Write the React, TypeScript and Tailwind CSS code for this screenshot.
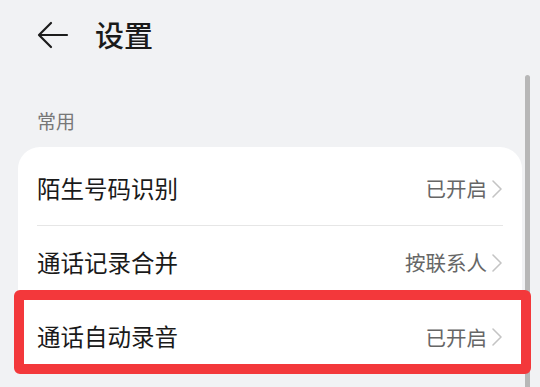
type Row = {
  label: string;
  value: string;
};

const rows: Row[] = [
  { label: "陌生号码识别", value: "已开启" },
  { label: "通话记录合并", value: "按联系人" },
  { label: "通话自动录音", value: "已开启" },
];

function Chevron() {
  return (
    <svg width="12" height="20" viewBox="0 0 12 20" fill="none" className="ml-[4px]">
      <path d="M2 2 L10 10 L2 18" stroke="#c4c4c4" strokeWidth="1.6" strokeLinecap="round" strokeLinejoin="round" />
    </svg>
  );
}

export default function App() {
  return (
    <div
      className="relative h-[387px] w-[540px] overflow-hidden bg-[#f1f2f4]"
      style={{ fontFamily: '"Noto Sans CJK SC", "Noto Sans", sans-serif' }}
    >
      <header className="flex h-[70px] items-center pl-[36px]">
        <svg width="34" height="30" viewBox="0 0 34 30" fill="none">
          <path d="M31 15 H4 M15 3 L3 15 L15 27" stroke="#1c1c1c" strokeWidth="2.2" strokeLinecap="round" strokeLinejoin="round" />
        </svg>
        <h1 className="ml-[25px] text-[29px] font-medium text-[#1a1a1a]">设置</h1>
      </header>

      <p className="mt-[35px] pl-[37px] text-[19px] leading-[32px] text-[#777777]">常用</p>

      <section className="mx-[18px] mt-[10px] rounded-t-[22px] bg-white pt-[5px]">
        {rows.map((row, i) => (
          <div key={row.label} className="px-[19px]">
            <div
              className={
                i < rows.length - 1
                  ? "flex h-[74px] items-center justify-between border-b border-[#e6e6e6]"
                  : "flex h-[74px] items-center justify-between"
              }
            >
              <span className="text-[23.5px] text-[#1a1a1a]">{row.label}</span>
              <span className="flex items-center text-[20.5px] text-[#666666]">
                {row.value}
                <Chevron />
              </span>
            </div>
          </div>
        ))}
      </section>

      {/* scrollbar */}
      <div className="absolute left-[525px] top-[75px] h-[330px] w-[5px] rounded-full bg-[#b7b7b7]" />

      {/* highlight */}
      <div className="absolute left-[14px] top-[290px] h-[84px] w-[517px] rounded-[6px] border-[10px] border-[#f3383b]" />
    </div>
  );
}
